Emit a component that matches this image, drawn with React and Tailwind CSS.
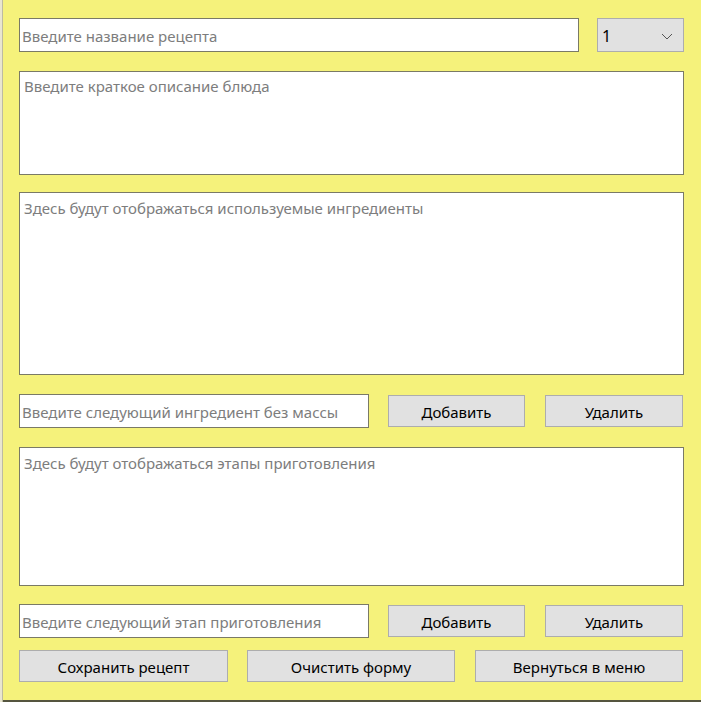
import { useState } from "react";

const field =
  "border border-[#7a7a66] bg-white text-[15px] text-black placeholder:text-[#7d7d7d] outline-none";
const btn =
  "bg-[#e1e1e1] border border-[#adadad] text-[15px] text-black flex items-center justify-center";

export default function App() {
  const [count, setCount] = useState("1");

  return (
    <div
      className="w-[701px] h-[702px] bg-[#f5f27b] flex overflow-hidden"
      style={{ fontFamily: '"Noto Sans", "Open Sans", sans-serif' }}
    >
      <div className="w-[3px] h-full bg-[#e9e6cf] border-r border-[#bdbba0]" />
      <div className="flex-1 flex flex-col">
        <div className="flex-1 flex flex-col pl-[16px] pr-[17px] pt-[18px]">
          {/* Title + portions */}
          <div className="flex gap-[18px] h-[34px]">
            <input
              className={`${field} w-[560px] h-full px-[2px] pt-[2px]`}
              placeholder="Введите название рецепта"
            />
            <button className="w-[87px] h-full bg-[#e1e1e1] border border-[#adadad] flex items-center justify-between pl-[4px] pr-[10px] text-[16px] pt-[2px]">
              <span>{count}</span>
              <svg width="12" height="7" viewBox="0 0 12 7" fill="none">
                <path d="M1 1l5 5 5-5" stroke="#555" strokeWidth="1" />
              </svg>
            </button>
          </div>

          <textarea
            className={`${field} mt-[19px] h-[104px] resize-none px-[4px] py-[3px]`}
            placeholder="Введите краткое описание блюда"
          />

          <textarea
            className={`${field} mt-[17px] h-[183px] resize-none px-[4px] py-[4px]`}
            placeholder="Здесь будут отображаться используемые ингредиенты"
          />

          <div className="flex items-center mt-[19px] h-[34px]">
            <input
              className={`${field} w-[350px] h-full px-[2px] pt-[2px]`}
              placeholder="Введите следующий ингредиент без массы"
            />
            <button className={`${btn} ml-[19px] w-[137px] h-[32px] pt-[2px]`}>Добавить</button>
            <button className={`${btn} ml-[20px] w-[138px] h-[32px] pt-[2px]`}>Удалить</button>
          </div>

          <textarea
            className={`${field} mt-[19px] h-[139px] resize-none px-[4px] py-[4px]`}
            placeholder="Здесь будут отображаться этапы приготовления"
          />

          <div className="flex items-center mt-[18px] h-[34px]">
            <input
              className={`${field} w-[350px] h-full px-[2px] pt-[2px]`}
              placeholder="Введите следующий этап приготовления"
            />
            <button className={`${btn} ml-[19px] w-[137px] h-[32px] pt-[2px]`}>Добавить</button>
            <button className={`${btn} ml-[20px] w-[138px] h-[32px] pt-[2px]`}>Удалить</button>
          </div>

          <div className="flex mt-[12px] gap-[19px]">
            <button className={`${btn} w-[209px] h-[32px] pt-[2px]`}>Сохранить рецепт</button>
            <button className={`${btn} w-[208px] h-[32px] pt-[2px]`}>Очистить форму</button>
            <button className={`${btn} ml-[1px] w-[208px] h-[32px] pt-[2px]`}>Вернуться в меню</button>
          </div>
        </div>
        <div className="h-[2px] bg-[#55553f]" />
      </div>
    </div>
  );
}
